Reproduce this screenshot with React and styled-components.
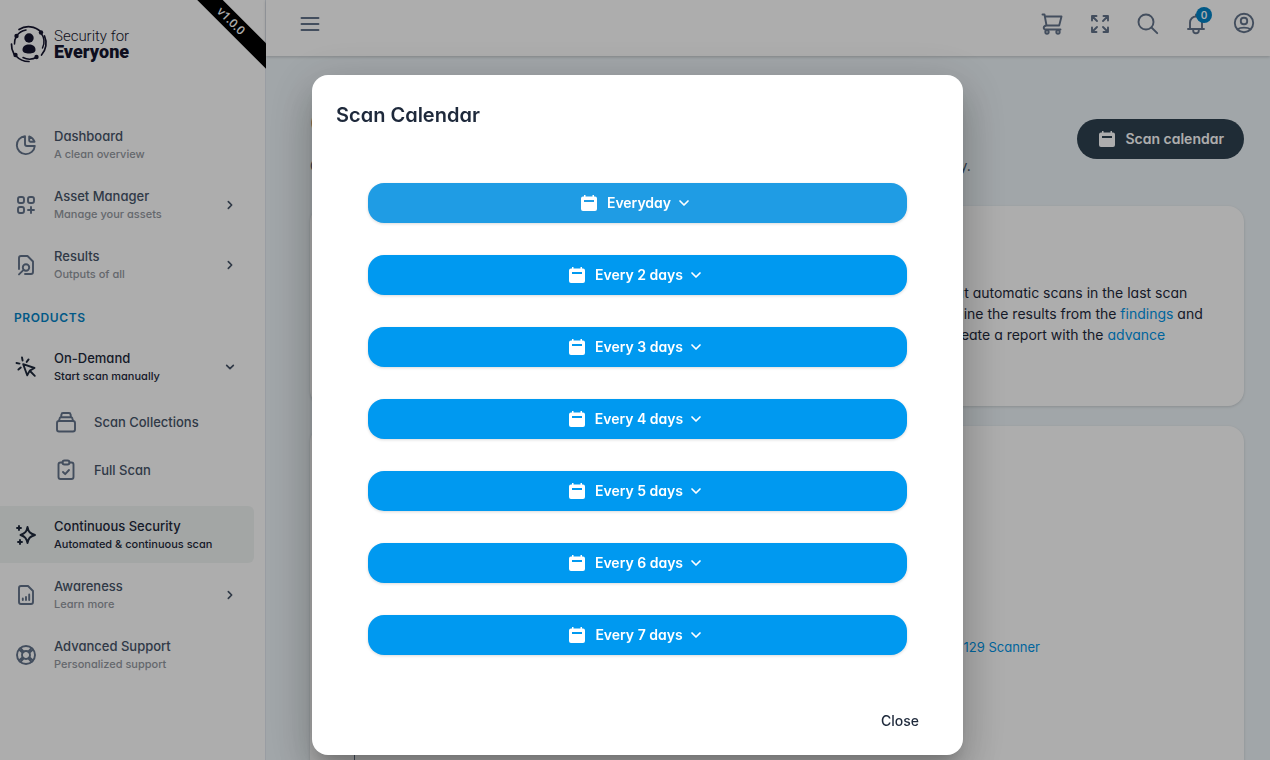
import React from 'react';
import styled, { createGlobalStyle } from 'styled-components';

const GlobalStyle = createGlobalStyle`
  * {
    box-sizing: border-box;
  }

  body {
    margin: 0;
    color: #1e293b;
    background: #eef5f9;
    font-family: Inter, "Liberation Sans", sans-serif;
    font-feature-settings: "cv11", "ss03";
    font-size: 14px;
    overflow: hidden;
  }

  a {
    color: #0095e8;
    text-decoration: none;
  }

  button {
    border: 0;
    padding: 0;
    background: none;
    color: inherit;
    font: inherit;
    font-feature-settings: inherit;
    cursor: pointer;
  }

  h1, h2, h3, p {
    margin: 0;
  }
`;

const Page = styled.div`
  display: flex;
  height: 100vh;
  overflow: hidden;
`;

const Sidebar = styled.aside`
  position: relative;
  flex: 0 0 266px;
  background: #fff;
  box-shadow: inset -1px 0 #e2e8f0;
  overflow: hidden;
`;

const Brand = styled.a`
  display: flex;
  align-items: center;
  gap: 6px;
  height: 116px;
  padding: 0 10px 28px;
  color: #15152e;
`;

const BrandText = styled.span`
  display: flex;
  flex-direction: column;
  font-family: Roboto, sans-serif;
  font-size: 15px;
  font-weight: 300;
  line-height: 16px;

  strong {
    font-size: 18px;
    font-weight: 900;
  }
`;

const Ribbon = styled.div`
  position: absolute;
  top: 12px;
  right: -45px;
  width: 160px;
  height: 18px;
  background: #000;
  color: #fff;
  font-family: "Open Sans", sans-serif;
  font-size: 12px;
  font-weight: 600;
  line-height: 18px;
  text-align: center;
  transform: rotate(45deg);
`;

const Nav = styled.nav`
  display: flex;
  flex-direction: column;
  gap: 3px;
  padding-right: 12px;
`;

const NavLink = styled.a`
  display: flex;
  align-items: center;
  gap: 16px;
  height: 57px;
  padding: 0 14px;
  border-radius: 0 6px 6px 0;
  background: ${({ $current }) => ($current ? '#f1f5f4' : 'transparent')};
  color: ${({ $dark }) => ($dark ? '#1e293b' : '#475569')};

  > svg:first-child {
    color: ${({ $dark }) => ($dark ? '#1e293b' : '#64748b')};
  }

  > svg:last-child {
    color: #475569;
  }
`;

const NavText = styled.span`
  flex: 1;
  display: flex;
  flex-direction: column;
  font-size: 13px;
  font-weight: 500;
  line-height: 18px;

  small {
    color: ${({ $dark }) => ($dark ? 'inherit' : '#94999f')};
    font-size: 11px;
  }
`;

const GroupLabel = styled.h3`
  padding: 13px 14px 8px;
  color: #0284c7;
  font-size: 12px;
  font-weight: 600;
  letter-spacing: 0.05em;
  line-height: 18px;
`;

const SubNav = styled.div`
  padding-bottom: 9px;
`;

const SubLink = styled.a`
  display: flex;
  align-items: center;
  gap: 16px;
  height: 48px;
  padding-left: 54px;
  color: #475569;
  font-size: 13px;
  font-weight: 500;

  svg {
    color: #64748b;
  }
`;

const Main = styled.div`
  flex: 1;
  min-width: 0;
`;

const Topbar = styled.header`
  position: relative;
  display: flex;
  padding: 0 2px 8px 20px;
  background: #fff;
  box-shadow: 0 1px 3px rgba(0, 0, 0, 0.2);
  color: #64748b;
`;

const IconButton = styled.button`
  position: relative;
  display: flex;
  align-items: center;
  justify-content: center;
  width: 48px;
  height: 48px;
`;

const Spacer = styled.div`
  flex: 1;
`;

const Badge = styled.span`
  position: absolute;
  top: 7px;
  right: 8px;
  width: 16px;
  height: 16px;
  border-radius: 8px;
  background: #0284c7;
  color: #fff;
  font-size: 10px;
  font-weight: 600;
  line-height: 16px;
  text-align: center;
`;

const Content = styled.main`
  padding: 43px 26px 0 44px;
`;

const PageHead = styled.div`
  display: flex;
  justify-content: space-between;
  height: 107px;
`;

const PageTitle = styled.h1`
  font-size: 36px;
  font-weight: 700;
  line-height: 48px;
`;

const Subtitle = styled.p`
  color: #475569;
  line-height: 38px;
`;

const CalendarButton = styled.button`
  display: flex;
  align-items: center;
  gap: 8px;
  height: 40px;
  margin-top: 20px;
  padding: 0 20px;
  border-radius: 20px;
  background: #2e4150;
  color: #fff;
  font-weight: 600;
  line-height: 20px;
`;

const Card = styled.section`
  margin-bottom: 20px;
  border-radius: 16px;
  background: #fff;
  box-shadow: 0 1px 3px rgba(0, 0, 0, 0.15);
`;

const InfoCard = styled(Card)`
  display: flex;
  justify-content: flex-end;
  height: 200px;
  padding: 76px 27px 0;
  line-height: 21px;
`;

const InfoText = styled.p`
  width: 420px;
  white-space: nowrap;
`;

const ScanCard = styled(Card)`
  display: flex;
  flex-direction: column;
  height: 400px;
  padding: 210px 44px 0;
`;

const ScanRow = styled.div`
  display: flex;
  justify-content: flex-end;
  padding-right: 160px;
  font-size: 13px;
  line-height: 22px;
`;

const Timeline = styled.div`
  flex: 1;
  border-left: 1px solid #64748b;
`;

const Backdrop = styled.div`
  position: fixed;
  inset: 0;
  display: flex;
  justify-content: center;
  align-items: flex-start;
  padding: 75px 0 5px 5px;
  background: rgba(0, 0, 0, 0.32);
`;

const Dialog = styled.div`
  width: 651px;
  padding: 24px 24px 14px;
  border-radius: 16px;
  background: #fff;
  box-shadow: 0 11px 15px -7px rgba(0, 0, 0, 0.2), 0 24px 38px 3px rgba(0, 0, 0, 0.14),
    0 9px 46px 8px rgba(0, 0, 0, 0.12);
`;

const DialogTitle = styled.h2`
  font-size: 20px;
  font-weight: 600;
  line-height: 32px;
`;

const DayList = styled.div`
  display: flex;
  flex-direction: column;
  gap: 32px;
  padding: 52px 32px 46px;
`;

const DayButton = styled.button`
  display: flex;
  align-items: center;
  justify-content: center;
  height: 40px;
  border-radius: 16px;
  background: ${({ $focused }) => ($focused ? '#1f9ce4' : '#0099f0')};
  box-shadow: 0 1px 3px rgba(0, 0, 0, 0.15);
  color: #fff;
  font-weight: 600;
  line-height: 20px;
`;

const DayLabel = styled.span`
  padding: 0 1px 0 8px;
`;

const DialogActions = styled.div`
  display: flex;
  justify-content: flex-end;
  padding-right: 4px;
`;

const CloseButton = styled.button`
  height: 40px;
  padding: 0 16px;
  font-weight: 500;
  line-height: 20px;
`;

const paths = {
  pie: (
    <>
      <path d="M11 3.200a9 9 0 1 0 9.800 9.800H13a2 2 0 0 1-2-2z" />
      <path d="M15.200 3.400v4.100c0 .7.500 1.200 1.200 1.200h4.100a9 9 0 0 0-5.300-5.300z" />
    </>
  ),
  apps: (
    <>
      <rect x="4" y="4" width="6" height="6" rx="2" />
      <rect x="14" y="4" width="6" height="6" rx="2" />
      <rect x="4" y="14" width="6" height="6" rx="2" />
      <path d="M17 14v6M14 17h6" />
    </>
  ),
  docSearch: (
    <>
      <path d="M5 16V5a2 2 0 0 1 2-2h6.500l5.500 5.500V19a2 2 0 0 1-2 2h-6" />
      <circle cx="12" cy="14.500" r="3.200" />
      <path d="M9.600 16.900 5 21.400" />
    </>
  ),
  click: (
    <>
      <path d="M9.200 9.200 20.500 13l-4.700 2.600L13.200 20.300z" />
      <path d="m16 16 4.800 4.800M8 2.500l.6 3M2.500 8l3 .6M14.600 4.400l-1.900 2.500M4.400 14.600l2.400-2" />
    </>
  ),
  collection: (
    <>
      <rect x="3" y="11" width="18" height="10.500" rx="2" />
      <path d="M5 11l.6-2.600A1.500 1.500 0 0 1 7 7.200h10a1.500 1.500 0 0 1 1.400 1.200L19 11M7 7l.5-2.500A1.500 1.500 0 0 1 9 3h6a1.500 1.500 0 0 1 1.500 1.500L17 7" />
    </>
  ),
  clipboard: (
    <>
      <path d="M8.500 4.500h-2a2 2 0 0 0-2 2V19a2 2 0 0 0 2 2h11a2 2 0 0 0 2-2V6.500a2 2 0 0 0-2-2h-2" />
      <rect x="8.500" y="2.500" width="7" height="4" rx="2" />
      <path d="m9 14 2.200 2.200L15 12" />
    </>
  ),
  sparkles: (
    <>
      <path d="M13.500 4c.9 4.800 2.400 6.500 7.500 8-5.100 1.500-6.600 3.200-7.500 8-.9-4.800-2.400-6.500-7-8 4.600-1.500 6.100-3.200 7-8z" />
      <path d="M5 3v4M3 5h4M6 17v4M4 19h4" />
    </>
  ),
  docChart: (
    <>
      <path d="M5 5a2 2 0 0 1 2-2h7l5 5v11a2 2 0 0 1-2 2H7a2 2 0 0 1-2-2z" />
      <path d="M8.800 17v-1.500M12 17v-3M15.200 17v-5.500" />
    </>
  ),
  support: (
    <>
      <circle cx="12" cy="12" r="9" />
      <circle cx="12" cy="12" r="4" />
      <path d="m5 6.500 3.700 3.200M6.500 5l3.200 3.700M17.500 5l-3.200 3.700M19 6.500l-3.700 3.200M5 17.500l3.700-3.200M6.500 19l3.200-3.700M17.500 19l-3.200-3.700M19 17.500l-3.700-3.200" />
    </>
  ),
  menu: <path d="M3.500 6h17M3.500 12h17M3.500 18h17" />,
  cart: (
    <>
      <path d="M2.500 2.500h2L6.500 13.500h12.700L21.500 4.500H4.900M6.500 13.500c-3.500.5-3.500 4-1 4h15" />
      <circle cx="7" cy="20" r="1.700" />
      <circle cx="18" cy="20" r="1.700" />
    </>
  ),
  expand: <path d="M9 9 4 4m0 4.500V4h4.500M15 9l5-5m-4.500 0H20v4.500M9 15l-5 5m0-4.500V20h4.500M15 15l5 5m-4.500 0H20v-4.500" />,
  search: (
    <>
      <circle cx="10" cy="10" r="7.500" />
      <path d="m15.500 15.500 5.700 5.700" />
    </>
  ),
  bell: (
    <>
      <path d="M4 17h16M6 17v-6.500a6 6 0 0 1 12 0V17" />
      <path d="M9.200 17.500v1a2.800 2.800 0 0 0 5.600 0v-1M12 2.500v1.500" />
    </>
  ),
  account: (
    <>
      <circle cx="12" cy="11" r="9.200" />
      <rect x="8.800" y="5.700" width="6.400" height="6.600" rx="3" />
      <path d="M5.500 17.300c3-2.200 10-2.200 13 0" />
    </>
  ),
  right: <path d="m10 8 4 4-4 4" />,
  down: <path d="m8 10 4 4 4-4" />,
};

const Icon = ({ name, size = 24, width = 1.9 }) => (
  <svg
    width={size}
    height={size}
    viewBox="0 0 24 24"
    fill="none"
    stroke="currentColor"
    strokeWidth={width}
    strokeLinecap="round"
    strokeLinejoin="round"
    aria-hidden="true"
  >
    {paths[name]}
  </svg>
);

const CalendarIcon = () => (
  <svg width="20" height="20" viewBox="0 0 20 20" fill="currentColor" aria-hidden="true">
    <path
      fillRule="evenodd"
      d="M5 2h1.500v1.500h7V2H15v1.500h1a2 2 0 0 1 2 2V16a2 2 0 0 1-2 2H4a2 2 0 0 1-2-2V5.500a2 2 0 0 1 2-2h1zM5 7v2h10V7z"
    />
  </svg>
);

const Logo = () => (
  <svg width="38" height="38" viewBox="0 0 38 38" fill="none" stroke="#15152e" strokeLinecap="round" aria-hidden="true">
    <path strokeWidth="1.700" d="M9 4.500A17.500 17.500 0 0 1 31 7M34.500 11a17.500 17.500 0 0 1-3 19M19 36.500A17.500 17.500 0 0 1 6 31M4 29A17.500 17.500 0 0 1 1.500 19" />
    <path strokeWidth="1.500" d="M6.500 11A14.500 14.500 0 0 1 16 5M4.500 19a14.500 14.500 0 0 1 2-8M31 8a14.500 14.500 0 0 1 1.500 15M27 32a14.500 14.500 0 0 1-14 .5" />
    <g fill="#15152e" stroke="none">
      <circle cx="6.500" cy="11" r="2.200" />
      <circle cx="31" cy="7.500" r="2.200" />
      <circle cx="5.500" cy="30" r="2.200" />
      <circle cx="26.500" cy="32" r="2.200" />
      <circle cx="19" cy="13" r="4.700" />
      <path d="M12.500 25c0-4 3-5.500 6.500-5.500s6.500 1.500 6.500 5.500c0 2.500-3 3.500-6.500 3.500s-6.500-1-6.500-3.500z" />
    </g>
  </svg>
);

const NavItem = ({ icon, title, note, arrow, dark, current }) => (
  <NavLink href="#" $dark={dark} $current={current}>
    <Icon name={icon} />
    <NavText $dark={dark}>
      {title}
      <small>{note}</small>
    </NavText>
    {arrow && <Icon name={arrow} size={20} width={2} />}
  </NavLink>
);

const days = ['Everyday', 'Every 2 days', 'Every 3 days', 'Every 4 days', 'Every 5 days', 'Every 6 days', 'Every 7 days'];

const App = () => (
  <>
    <GlobalStyle />
    <Page>
      <Sidebar>
        <Brand href="#">
          <Logo />
          <BrandText>
            Security for
            <strong>Everyone</strong>
          </BrandText>
        </Brand>
        <Ribbon>v1.0.0</Ribbon>
        <Nav>
          <NavItem icon="pie" title="Dashboard" note="A clean overview" />
          <NavItem icon="apps" title="Asset Manager" note="Manage your assets" arrow="right" />
          <NavItem icon="docSearch" title="Results" note="Outputs of all" arrow="right" />
          <GroupLabel>PRODUCTS</GroupLabel>
          <NavItem icon="click" title="On-Demand" note="Start scan manually" arrow="down" dark />
          <SubNav>
            <SubLink href="#">
              <Icon name="collection" />
              Scan Collections
            </SubLink>
            <SubLink href="#">
              <Icon name="clipboard" />
              Full Scan
            </SubLink>
          </SubNav>
          <NavItem icon="sparkles" title="Continuous Security" note="Automated & continuous scan" dark current />
          <NavItem icon="docChart" title="Awareness" note="Learn more" arrow="right" />
          <NavItem icon="support" title="Advanced Support" note="Personalized support" />
        </Nav>
      </Sidebar>
      <Main>
        <Topbar>
          <IconButton aria-label="Toggle navigation">
            <Icon name="menu" />
          </IconButton>
          <Spacer />
          <IconButton aria-label="Cart">
            <Icon name="cart" />
          </IconButton>
          <IconButton aria-label="Fullscreen">
            <Icon name="expand" />
          </IconButton>
          <IconButton aria-label="Search">
            <Icon name="search" />
          </IconButton>
          <IconButton aria-label="Notifications">
            <Icon name="bell" />
            <Badge>0</Badge>
          </IconButton>
          <IconButton aria-label="Account">
            <Icon name="account" />
          </IconButton>
        </Topbar>
        <Content>
          <PageHead>
            <div>
              <PageTitle>Continuous Security</PageTitle>
              <Subtitle>
                Get a calendar for the automated scans of all your assets and follow the new findings continuously.
              </Subtitle>
            </div>
            <CalendarButton>
              <CalendarIcon />
              Scan calendar
            </CalendarButton>
          </PageHead>
          <InfoCard>
            <InfoText>
              You can see details about automatic scans in the last scan
              <br />
              table. You can also examine the results from the <a href="#">findings</a> and
              <br />
              the assets pages, and create a report with the <a href="#">advance</a>
            </InfoText>
          </InfoCard>
          <ScanCard>
            <ScanRow>
              <a href="#">129 Scanner</a>
            </ScanRow>
            <Timeline />
          </ScanCard>
        </Content>
      </Main>
    </Page>
    <Backdrop>
      <Dialog role="dialog" aria-modal="true" aria-labelledby="calendar-title">
        <DialogTitle id="calendar-title">Scan Calendar</DialogTitle>
        <DayList>
          {days.map((day, i) => (
            <DayButton key={day} $focused={i === 0}>
              <CalendarIcon />
              <DayLabel>{day}</DayLabel>
              <Icon name="down" width={1.7} />
            </DayButton>
          ))}
        </DayList>
        <DialogActions>
          <CloseButton>Close</CloseButton>
        </DialogActions>
      </Dialog>
    </Backdrop>
  </>
);

export default App;
